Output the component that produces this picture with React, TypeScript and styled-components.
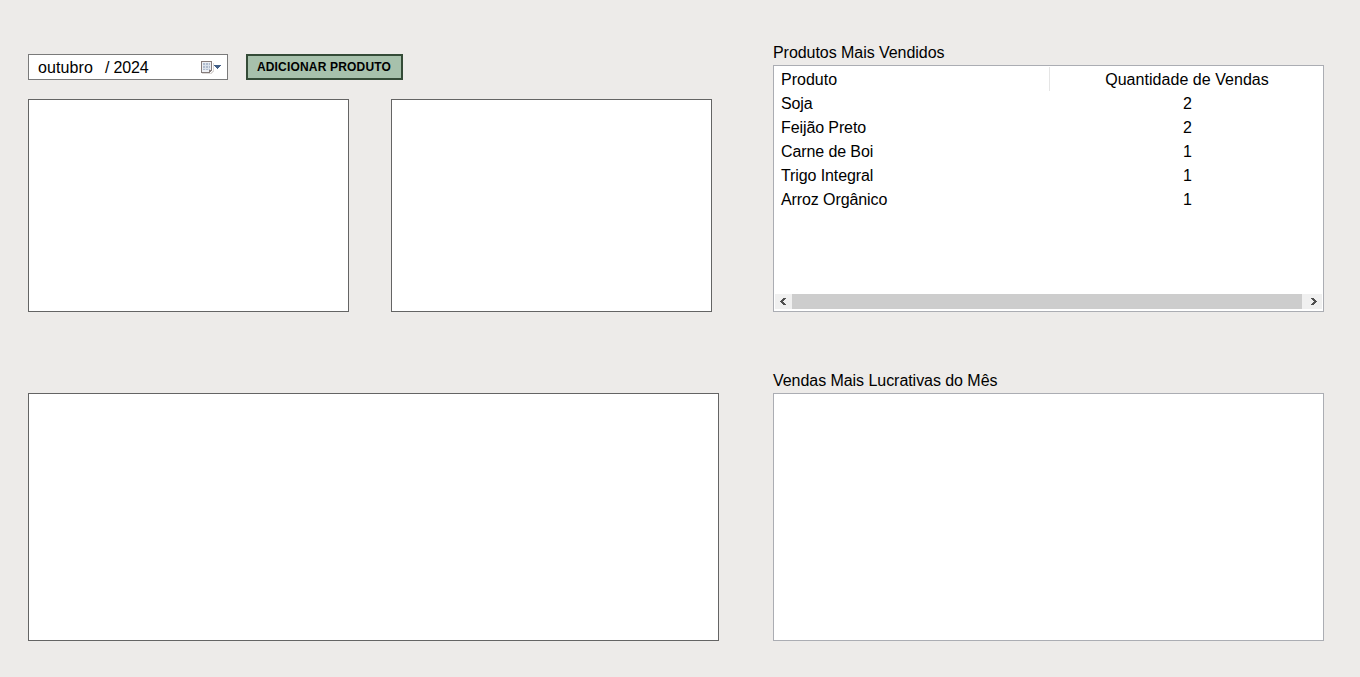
import React from "react";
import styled, { createGlobalStyle } from "styled-components";

const GlobalStyle = createGlobalStyle`
  *, *::before, *::after { box-sizing: border-box; }
  body {
    margin: 0;
    background: #edebe9;
    font-family: "Liberation Sans", Arial, sans-serif;
    font-size: 16px;
    color: #000;
  }
`;

const Page = styled.main`
  display: grid;
  grid-template-columns: 691px 551px;
  grid-template-rows: 272px 1fr;
  column-gap: 54px;
  row-gap: 56px;
  height: 677px;
  padding: 40px 36px 36px 28px;
`;

const Filters = styled.section`
  display: flex;
  flex-direction: column;
  gap: 19px;
  padding-top: 14px;
`;

const Toolbar = styled.div`
  display: flex;
  gap: 18px;
  height: 26px;
`;

const MonthPicker = styled.div`
  display: flex;
  align-items: center;
  width: 200px;
  border: 1px solid #7a7a7a;
  background: #fff;
  padding: 2px 5px 0 9px;
`;

const Month = styled.span`
  width: 67px;
  letter-spacing: 0.1px;
`;

const Year = styled.span`
  flex: 1;
  letter-spacing: -0.15px;
`;

const AddButton = styled.button`
  width: 157px;
  padding: 0 1px 1px 0;
  border: 2px solid #344b37;
  background: #a7c1ac;
  color: #000;
  font: bold 12px/20px "Liberation Sans", Arial, sans-serif;
  letter-spacing: 0.18px;
  white-space: nowrap;
`;

const Charts = styled.div`
  display: flex;
  gap: 42px;
`;

const Chart = styled.div`
  width: 321px;
  height: 213px;
  border: 1px solid #646464;
  background: #fff;
`;

const WideChart = styled(Chart)`
  width: 691px;
  height: 248px;
  margin-top: 25px;
`;

const Report = styled.section`
  display: flex;
  flex-direction: column;
`;

const Title = styled.h2`
  margin: 0;
  height: 25px;
  font-size: 16px;
  font-weight: 400;
  line-height: 25px;
  letter-spacing: -0.05px;
`;

const ListView = styled.div<{ $height: number }>`
  display: flex;
  flex-direction: column;
  justify-content: space-between;
  height: ${(p) => p.$height}px;
  border: 1px solid #abadb3;
  background: #fff;
  padding: 1px;
`;

const Table = styled.table`
  border-collapse: collapse;
  table-layout: fixed;
  width: 547px;
`;

const Cell = styled.td<{ $count?: boolean }>`
  width: ${(p) => (p.$count ? 272 : 275)}px;
  height: 24px;
  padding: ${(p) => (p.$count ? "2px 0 0 3px" : "2px 0 0 6px")};
  line-height: 22px;
  text-align: ${(p) => (p.$count ? "center" : "left")};
  font-weight: 400;
  letter-spacing: ${(p) => (p.$count ? 0 : -0.1)}px;
`;

const HeaderCell = styled(Cell)`
  box-shadow: ${(p) => (p.$count ? "none" : "inset -1px 0 #e5e5e5")};
  padding-left: ${(p) => (p.$count ? 2 : 6)}px;
  letter-spacing: ${(p) => (p.$count ? 0.04 : 0)}px;
`;

const ScrollBar = styled.div`
  display: flex;
  height: 15px;
  margin-bottom: 1px;
  background: #f0f0f0;
`;

const ScrollButton = styled.span<{ $width: number; $end?: boolean }>`
  display: flex;
  align-items: center;
  justify-content: ${(p) => (p.$end ? "flex-end" : "flex-start")};
  width: ${(p) => p.$width}px;
  padding: 0 5px;
`;

const Thumb = styled.span`
  flex: 1;
  background: #cdcdcd;
`;

const CalendarIcon = () => (
  <svg width="21" height="16" viewBox="0 0 21 16" shapeRendering="crispEdges">
    <path d="M1 13h9v-1h1v-1h1V3h1v9h-1v1h-1v1H1z" fill="#dcd8d6" />
    <path d="M0 1h11v10h-1v1H9v1H0z" fill="#857c7b" />
    <path d="M1 2h9v8H8v2H1z" fill="#eef0f5" />
    <path d="M2 3h7v7H2z" fill="#b0bccf" />
    <path d="M2 5.500h7M2 8.500h7M4.500 3v7M7.500 3v7" stroke="#dbe2eb" />
    <path d="M8 10h2v1H9v1H8z" fill="#857c7b" />
    <path d="M13 5h7v1h-1v1h-1v1h-1v1h-1V8h-1V7h-1V6h-1z" fill="#425f87" />
  </svg>
);

const Arrow = ({ right = false }: { right?: boolean }) => (
  <svg width="6" height="7" viewBox="0 0 6 7" shapeRendering="crispEdges">
    <path
      transform={right ? "translate(6 0) scale(-1 1)" : undefined}
      d="M3 0h3v1H5v1H4v1H3v1h1v1h1v1h1v1H3V6H2V5H1V4H0V3h1V2h1V1h1z"
      fill="#505050"
    />
  </svg>
);

const products = [
  { name: "Soja", sales: 2 },
  { name: "Feijão Preto", sales: 2 },
  { name: "Carne de Boi", sales: 1 },
  { name: "Trigo Integral", sales: 1 },
  { name: "Arroz Orgânico", sales: 1 },
];

export default function App() {
  return (
    <>
      <GlobalStyle />
      <Page>
        <Filters>
          <Toolbar>
            <MonthPicker>
              <Month>outubro</Month>
              <Year>/ 2024</Year>
              <CalendarIcon />
            </MonthPicker>
            <AddButton>ADICIONAR PRODUTO</AddButton>
          </Toolbar>
          <Charts>
            <Chart />
            <Chart />
          </Charts>
        </Filters>
        <Report>
          <Title>Produtos Mais Vendidos</Title>
          <ListView $height={247}>
            <Table>
              <thead>
                <tr>
                  <HeaderCell as="th">Produto</HeaderCell>
                  <HeaderCell as="th" $count>Quantidade de Vendas</HeaderCell>
                </tr>
              </thead>
              <tbody>
                {products.map((p) => (
                  <tr key={p.name}>
                    <Cell>{p.name}</Cell>
                    <Cell $count>{p.sales}</Cell>
                  </tr>
                ))}
              </tbody>
            </Table>
            <ScrollBar>
              <ScrollButton $width={17}><Arrow /></ScrollButton>
              <Thumb />
              <ScrollButton $width={20} $end><Arrow right /></ScrollButton>
            </ScrollBar>
          </ListView>
        </Report>
        <WideChart />
        <Report>
          <Title>Vendas Mais Lucrativas do Mês</Title>
          <ListView $height={248} />
        </Report>
      </Page>
    </>
  );
}
